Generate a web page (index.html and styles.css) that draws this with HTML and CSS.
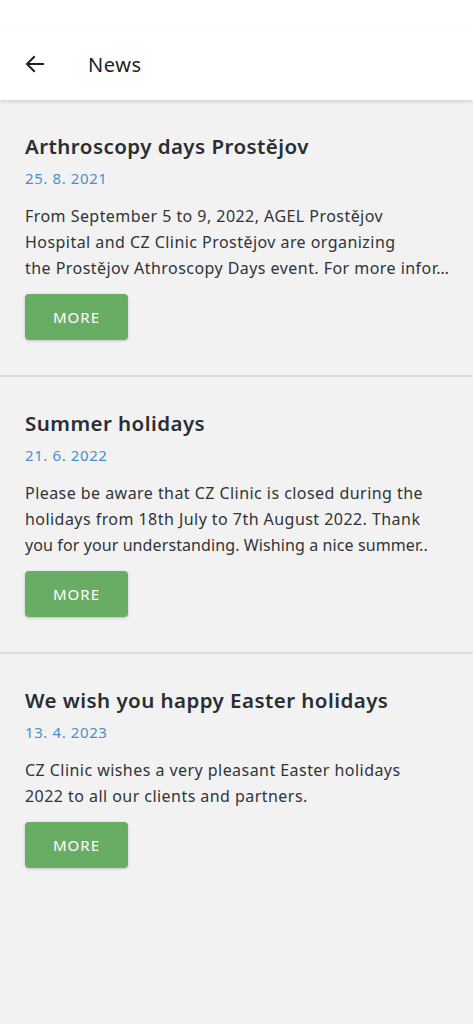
FILE: index.html
```html
<!DOCTYPE html>
<html>
<head>
<meta charset="utf-8">
<link rel="stylesheet" href="styles.css">
</head>
<body>
<div class="statusbar"></div>
<header class="appbar">
  <button class="back" aria-label="Back">
    <svg width="24" height="24" viewBox="0 0 24 24"><path d="M20 12H4.5M11 5l-7 7 7 7" fill="none" stroke="#1f1f1f" stroke-width="2" stroke-linecap="square"/></svg>
  </button>
  <h1 class="title">News</h1>
</header>
<main class="list">
  <article class="item">
    <h2 class="item-title">Arthroscopy days Prostějov</h2>
    <div class="item-date">25. 8. 2021</div>
    <p class="item-text"><span class="line">From September 5 to 9, 2022, AGEL Prostějov</span><span class="line">Hospital and CZ Clinic Prostějov are organizing</span><span class="line">the Prostějov Athroscopy Days event. For more infor…</span></p>
    <button class="more">MORE</button>
  </article>
  <article class="item">
    <h2 class="item-title">Summer holidays</h2>
    <div class="item-date">21. 6. 2022</div>
    <p class="item-text"><span class="line">Please be aware that CZ Clinic is closed during the</span><span class="line">holidays from 18th July to 7th August 2022. Thank</span><span class="line tight">you for your understanding. Wishing a nice summer..</span></p>
    <button class="more">MORE</button>
  </article>
  <article class="item last">
    <h2 class="item-title">We wish you happy Easter holidays</h2>
    <div class="item-date">13. 4. 2023</div>
    <p class="item-text"><span class="line">CZ Clinic wishes a very pleasant Easter holidays</span><span class="line">2022 to all our clients and partners.</span></p>
    <button class="more">MORE</button>
  </article>
</main>
</body>
</html>
```
FILE: styles.css
```css
html, body {
  margin: 0;
  padding: 0;
  background: #f2f2f2;
  font-family: "Noto Sans", "Open Sans", sans-serif;
  color: #2b2f33;
}
body {
  min-height: 1024px;
}
.statusbar {
  height: 28px;
  background: #ffffff;
}
.appbar {
  height: 72px;
  background: #ffffff;
  display: flex;
  align-items: center;
  box-shadow: 0 2px 4px rgba(0,0,0,0.12);
  position: relative;
  z-index: 1;
}
.back {
  border: 0;
  background: none;
  padding: 0;
  margin-left: 23px;
  width: 24px;
  height: 24px;
  display: flex;
}
.title {
  margin: 0 0 0 41px;
  font-size: 20px;
  font-weight: 400;
  letter-spacing: 0.6px;
  color: #1f1f1f;
}
.list {
  display: flex;
  flex-direction: column;
}
.item {
  padding: 32px 25px 35px;
  border-bottom: 2px solid #dcdcdc;
}
.item.last {
  border-bottom: 0;
}
.item-title {
  margin: 0;
  font-size: 20.5px;
  font-weight: 600;
  letter-spacing: 0.45px;
  line-height: 28px;
  color: #2a2d31;
}
.item-date {
  margin-top: 8px;
  font-size: 15px;
  letter-spacing: 0.6px;
  line-height: 20px;
  color: #4a8fcd;
}
.item-text {
  margin: 15px 0 13px;
  font-size: 16px;
  letter-spacing: 0.45px;
  line-height: 26px;
  color: #303438;
}
.line {
  display: block;
  white-space: nowrap;
  overflow: hidden;
  text-overflow: clip;
}
.line.tight {
  letter-spacing: 0.1px;
}
.more {
  width: 103px;
  height: 46px;
  border: 0;
  border-radius: 4px;
  background: #69ad64;
  color: #ffffff;
  font-family: inherit;
  font-size: 15px;
  letter-spacing: 1px;
  box-shadow: 0 1px 3px rgba(0,0,0,0.2);
}
```
